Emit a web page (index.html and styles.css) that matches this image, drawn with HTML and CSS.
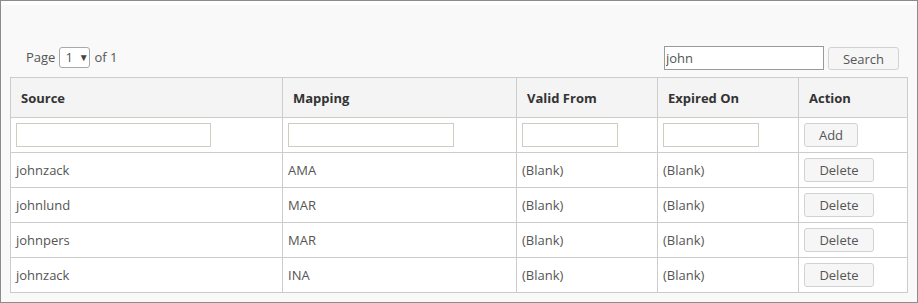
FILE: index.html
```html
<!DOCTYPE html>
<html>
<head>
<meta charset="utf-8">
<link rel="stylesheet" href="styles.css">
</head>
<body>
<div class="frame">
  <div class="panel">
    <div class="toolbar">
      <div class="pager">
        <span>Page</span>
        <span class="select"><span class="sel-val">1</span><span class="sel-arrow">&#9660;</span></span>
        <span>of 1</span>
      </div>
      <div class="search">
        <input class="search-input" type="text" value="john">
        <button class="btn btn-search">Search</button>
      </div>
    </div>
    <table class="grid">
      <colgroup>
        <col class="c-source">
        <col class="c-mapping">
        <col class="c-date">
        <col class="c-date">
        <col class="c-action">
      </colgroup>
      <thead>
        <tr>
          <th>Source</th>
          <th>Mapping</th>
          <th>Valid From</th>
          <th>Expired On</th>
          <th>Action</th>
        </tr>
      </thead>
      <tbody>
        <tr>
          <td><input class="f-input f-source" type="text"></td>
          <td><input class="f-input f-mapping" type="text"></td>
          <td><input class="f-input f-date" type="text"></td>
          <td><input class="f-input f-date" type="text"></td>
          <td><button class="btn btn-add">Add</button></td>
        </tr>
        <tr>
          <td>johnzack</td><td>AMA</td><td>(Blank)</td><td>(Blank)</td>
          <td><button class="btn btn-del">Delete</button></td>
        </tr>
        <tr>
          <td>johnlund</td><td>MAR</td><td>(Blank)</td><td>(Blank)</td>
          <td><button class="btn btn-del">Delete</button></td>
        </tr>
        <tr>
          <td>johnpers</td><td>MAR</td><td>(Blank)</td><td>(Blank)</td>
          <td><button class="btn btn-del">Delete</button></td>
        </tr>
        <tr>
          <td>johnzack</td><td>INA</td><td>(Blank)</td><td>(Blank)</td>
          <td><button class="btn btn-del">Delete</button></td>
        </tr>
      </tbody>
    </table>
  </div>
</div>
</body>
</html>
```
FILE: styles.css
```css
html, body {
  margin: 0;
  padding: 0;
  background: #ffffff;
}
body {
  font-family: "Open Sans", "Liberation Sans", sans-serif;
  font-size: 13px;
  color: #555555;
}
.frame {
  width: 918px;
  height: 303px;
  box-sizing: border-box;
  border: 1px solid #8c8c8c;
  background: #f9f9f9;
}
.panel {
  border-top: 4px solid #ffffff;
}
.toolbar {
  display: flex;
  justify-content: space-between;
  align-items: center;
  height: 24px;
  margin-top: 41px;
  margin-bottom: 7px;
  padding: 0 18px 0 25px;
}
.pager {
  display: flex;
  align-items: center;
  gap: 4px;
  margin-top: -2px;
  color: #555555;
}
.select {
  display: inline-flex;
  align-items: center;
  box-sizing: border-box;
  width: 31px;
  height: 21px;
  border: 1px solid #a9a9a9;
  border-radius: 3px;
  background: #ffffff;
  padding-left: 5px;
  gap: 6px;
}
.sel-val {
  color: #555555;
}
.sel-arrow {
  font-size: 10px;
  color: #444444;
  margin-top: -1px;
}
.search {
  display: flex;
  align-items: center;
  gap: 4px;
}
.search-input {
  box-sizing: border-box;
  width: 160px;
  height: 24px;
  border: 1px solid #9a9a9a;
  border-radius: 0;
  padding: 0 1px;
  margin: 0;
  font-family: inherit;
  font-size: 13px;
  color: #555555;
  background: #ffffff;
  outline: none;
}
.btn {
  box-sizing: border-box;
  font-family: inherit;
  font-size: 13px;
  color: #555555;
  background: #f6f6f6;
  border: 1px solid #d2d2d2;
  border-radius: 3px;
  padding: 0;
  margin: 0;
  height: 24px;
}
.btn-search {
  width: 71px;
  height: 23px;
  margin-top: 1px;
}
.btn-add {
  width: 54px;
}
.btn-del {
  width: 70px;
}
.grid {
  margin-left: 9px;
  width: 897px;
  table-layout: fixed;
  border-collapse: collapse;
  background: #ffffff;
}
.c-source { width: 272px; }
.c-mapping { width: 234px; }
.c-date { width: 141px; }
.c-action { width: 109px; }
.grid th, .grid td {
  border: 1px solid #cccccc;
  text-align: left;
  vertical-align: middle;
  white-space: nowrap;
}
.grid th {
  background: #f4f4f4;
  color: #333333;
  font-weight: bold;
  height: 40px;
  padding: 0 10px;
  box-sizing: border-box;
}
.grid td {
  height: 35px;
  padding: 0 5px;
  box-sizing: border-box;
  color: #555555;
}
.f-input {
  box-sizing: border-box;
  height: 24px;
  border: 1px solid #cfcdbf;
  border-radius: 0;
  margin: 0;
  padding: 0;
  background: #ffffff;
  display: block;
  outline: none;
}
.f-source { width: 195px; }
.f-mapping { width: 166px; }
.f-date { width: 96px; }
```
